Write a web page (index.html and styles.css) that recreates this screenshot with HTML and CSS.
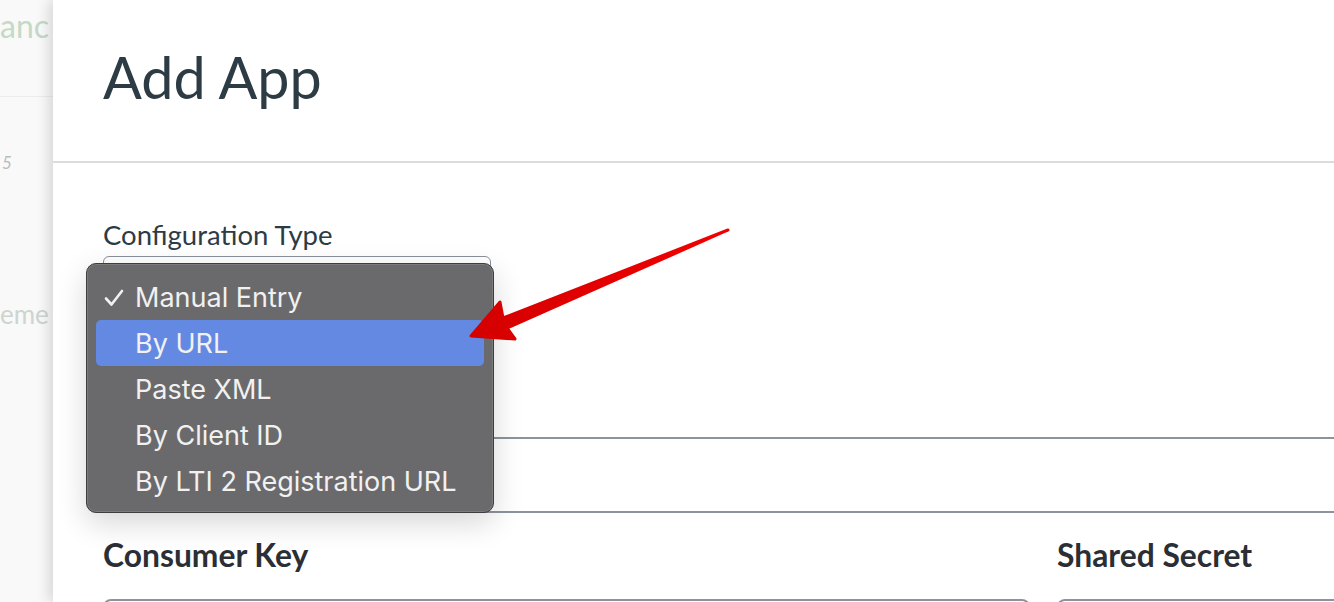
FILE: index.html
```html
<!DOCTYPE html>
<html>
<head>
<meta charset="utf-8">
<link rel="stylesheet" href="styles.css">
</head>
<body>
<div class="page">
  <aside class="behind">
    <div class="behind-head"><span class="behind-word">anc</span></div>
    <div class="behind-num">5</div>
    <div class="behind-word2">eme</div>
  </aside>
  <main class="modal">
    <header class="modal-head">
      <h1 class="title">Add App</h1>
    </header>
    <section class="modal-body">
      <div class="field">
        <label class="label">Configuration Type</label>
        <div class="select-wrap">
          <div class="select"></div>
          <ul class="menu">
            <li class="item"><svg class="check" width="20" height="18" viewBox="0 0 20 18"><polyline points="2,9.5 7.5,15.5 18,2" fill="none" stroke="#f1f1f1" stroke-width="2.6" stroke-linecap="round" stroke-linejoin="round"/></svg>Manual Entry</li>
            <li class="item active">By URL</li>
            <li class="item">Paste XML</li>
            <li class="item">By Client ID</li>
            <li class="item">By LTI 2 Registration URL</li>
          </ul>
        </div>
      </div>
      <div class="wide-input"></div>
      <div class="cols">
        <div class="col">
          <div class="strong-label">Consumer Key</div>
          <div class="text-input"></div>
        </div>
        <div class="col">
          <div class="strong-label">Shared Secret</div>
          <div class="text-input"></div>
        </div>
      </div>
    </section>
    <svg class="arrow" width="280" height="130" viewBox="460 220 280 130">
      <defs>
        <linearGradient id="ag" x1="0" y1="0" x2="1" y2="0">
          <stop offset="0" stop-color="#d40000"/>
          <stop offset="1" stop-color="#f20000"/>
        </linearGradient>
      </defs>
      <polygon fill="url(#ag)" stroke="url(#ag)" stroke-width="3" stroke-linejoin="round"
        points="471,336 500,302 503,318 728,230 507,328 515,339"/>
    </svg>
  </main>
</div>
</body>
</html>
```

FILE: styles.css
```css
* { box-sizing: border-box; }
html, body { margin: 0; padding: 0; }
body {
  width: 1334px;
  height: 602px;
  overflow: hidden;
  font-family: Lato, "Open Sans", sans-serif;
  background: #f8f8f8;
}
.page {
  display: flex;
  height: 602px;
}
.behind {
  width: 53px;
  flex: none;
  background: #f9f9f9;
  overflow: hidden;
  white-space: nowrap;
}
.behind-head {
  height: 97px;
  border-bottom: 1px solid #ececec;
  padding-top: 6px;
}
.behind-word {
  font-size: 32px;
  color: #c5dac6;
}
.behind-num {
  font-style: italic;
  font-size: 17px;
  color: #b8bcbf;
  margin-top: 55px;
  padding-left: 2px;
}
.behind-word2 {
  font-size: 26px;
  color: #ccd5cf;
  margin-top: 125px;
}
.modal {
  flex: 1;
  position: relative;
  background: #fff;
  box-shadow: -5px 0 12px rgba(0,0,0,0.13);
  overflow: hidden;
}
.modal-head {
  height: 163px;
  border-bottom: 2px solid #dcdcdf;
  padding: 42px 0 0 50px;
}
.title {
  margin: 0;
  font-weight: 400;
  font-size: 57.5px;
  line-height: 1.2;
  color: #2d3b45;
}
.modal-body {
  padding: 57px 0 0 50px;
}
.label {
  display: block;
  font-size: 27.5px;
  line-height: 29px;
  color: #2d3b45;
}
.select-wrap {
  position: relative;
  margin-top: 7px;
  height: 150px;
}
.select {
  width: 388px;
  height: 46px;
  border: 1px solid #8b8f9a;
  border-radius: 6px;
  background: #fff;
}
.menu {
  position: absolute;
  left: -17px;
  top: 7px;
  width: 408px;
  height: 250px;
  margin: 0;
  padding: 10px 9px 0;
  list-style: none;
  background: #6a6a6c;
  border: 1px solid #3d3d3f;
  border-radius: 10px;
  box-shadow: 0 0 0 1px rgba(255,255,255,0.12) inset, 0 10px 30px rgba(0,0,0,0.16);
  z-index: 2;
}
.item {
  height: 46px;
  display: flex;
  align-items: center;
  padding-left: 39px;
  position: relative;
  font-family: Inter, "Noto Sans", sans-serif;
  font-size: 27px;
  color: #f1f1f1;
  border-radius: 5px;
}
.item.active {
  background: #6389e2;
}
.check {
  position: absolute;
  left: 8px;
  top: 15px;
}
.wide-input {
  margin-top: 31px;
  height: 76px;
  border: 2px solid #8e929c;
  border-right: none;
  border-radius: 6px 0 0 6px;
}
.cols {
  display: grid;
  grid-template-columns: 927px 1fr;
  column-gap: 27px;
  margin-top: 24px;
}
.strong-label {
  font-weight: 700;
  font-size: 31.8px;
  line-height: 36px;
  color: #2b2f35;
}
.text-input {
  margin-top: 26px;
  height: 48px;
  border: 2px solid #8e929c;
  border-radius: 8px;
}
.col:last-child .text-input {
  border-right: none;
  border-radius: 8px 0 0 8px;
}
.arrow {
  position: absolute;
  left: 407px;
  top: 220px;
  z-index: 3;
}
```
